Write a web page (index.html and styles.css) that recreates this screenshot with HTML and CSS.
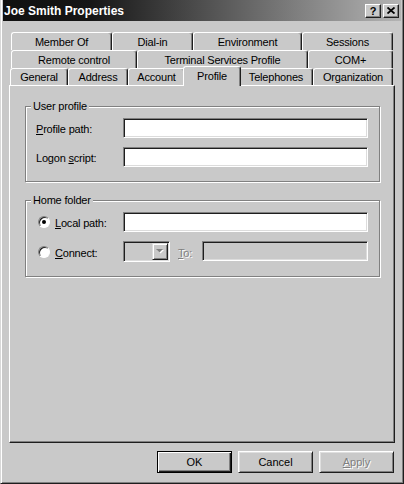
FILE: index.html
```html
<!DOCTYPE html>
<html lang="en">
<head>
    <meta charset="UTF-8">
    <meta name="viewport" content="width=device-width, initial-scale=1.0">
    <title>Joe Smith Properties</title>
    <link rel="stylesheet" href="styles.css">
</head>
<body>
    <div class="window">
        <div class="titlebar">
            <span class="title">Joe Smith Properties</span>
            <div class="caption-buttons">
                <span class="caption-btn">?</span>
                <span class="caption-btn">
                    <svg width="8" height="7" viewBox="0 0 8 7">
                        <path d="M0.5 0.5 L7.5 6.5 M7.5 0.5 L0.5 6.5" stroke="#000" stroke-width="1.8" fill="none"/>
                    </svg>
                </span>
            </div>
        </div>

        <div class="client">
            <div class="tabs">
                <div class="tab-row row-1">
                    <div class="tab">Member Of</div>
                    <div class="tab">Dial-in</div>
                    <div class="tab">Environment</div>
                    <div class="tab">Sessions</div>
                </div>
                <div class="tab-row row-2">
                    <div class="tab">Remote control</div>
                    <div class="tab">Terminal Services Profile</div>
                    <div class="tab">COM+</div>
                </div>
                <div class="tab-row row-3">
                    <div class="tab">General</div>
                    <div class="tab">Address</div>
                    <div class="tab">Account</div>
                    <div class="tab active">Profile</div>
                    <div class="tab">Telephones</div>
                    <div class="tab">Organization</div>
                </div>
            </div>

            <div class="panel">
                <fieldset class="group">
                    <legend>User profile</legend>
                    <div class="fields">
                        <label for="profilePath"><u>P</u>rofile path:</label>
                        <input type="text" id="profilePath" class="textbox">
                        <label for="logonScript">Logon <u>s</u>cript:</label>
                        <input type="text" id="logonScript" class="textbox">
                    </div>
                </fieldset>

                <fieldset class="group">
                    <legend>Home folder</legend>
                    <div class="fields fields-home">
                        <div class="option">
                            <span class="radio checked"></span>
                            <span><u>L</u>ocal path:</span>
                        </div>
                        <input type="text" class="textbox">
                        <div class="option">
                            <span class="radio"></span>
                            <span><u>C</u>onnect:</span>
                        </div>
                        <div class="connect">
                            <div class="combo">
                                <span class="combo-btn">
                                    <svg width="8" height="5" viewBox="0 0 8 5">
                                        <path d="M1 1 H8 L4.5 4.5 Z" fill="#fff"/>
                                        <path d="M0 0 H7 L3.5 3.5 Z" fill="#808080"/>
                                    </svg>
                                </span>
                            </div>
                            <span class="disabled-text to-label"><u>T</u>o:</span>
                            <input type="text" class="textbox" disabled>
                        </div>
                    </div>
                </fieldset>
            </div>

            <div class="actions">
                <button class="btn btn-default">OK</button>
                <button class="btn">Cancel</button>
                <button class="btn disabled-text"><u>A</u>pply</button>
            </div>
        </div>
    </div>
</body>
</html>
```

FILE: styles.css
```css
* {
    box-sizing: border-box;
}
body {
    margin: 0;
    background: #c9c9c9;
    font-family: "Liberation Sans", Arial, sans-serif;
    font-size: 11px;
    letter-spacing: -0.2px;
    color: #000;
}
.window {
    width: 404px;
    height: 484px;
    padding: 0 2px;
    background: #c9c9c9;
    border: 1px solid #1e1e1e;
    border-top: 0;
    border-left-color: #d8d8d8;
    box-shadow: inset 1px 0 #fff, inset -1px -1px #808080;
}

/* title bar */
.titlebar {
    display: flex;
    align-items: center;
    justify-content: space-between;
    height: 21px;
    padding: 0 2px 0 1px;
    background: linear-gradient(to right, #101010, #161616 22%, #b4b4b4);
}
.title {
    color: #fff;
    font-size: 12px;
    font-weight: bold;
    letter-spacing: 0;
}
.caption-buttons {
    display: flex;
    gap: 2px;
}
.caption-btn {
    display: flex;
    align-items: center;
    justify-content: center;
    width: 16px;
    height: 14px;
    background: #c9c9c9;
    border: 1px solid;
    border-color: #fff #1e1e1e #1e1e1e #fff;
    box-shadow: inset -1px -1px #808080;
    font-size: 11px;
    font-weight: bold;
    letter-spacing: 0;
}

/* tabs */
.client {
    padding: 11px 6px 0;
}
.tabs {
    height: 53px;
}
.tab-row {
    display: grid;
    height: 18px;
    margin-left: 2px;
}
.row-1 {
    grid-template-columns: 101px 81px 109px 91px;
}
.row-2 {
    grid-template-columns: 126px 171px 85px;
}
.row-3 {
    grid-template-columns: 58px 60px 57px 54px 74px 80px;
    height: 17px;
    margin-left: 1px;
}
.tab {
    display: flex;
    align-items: center;
    justify-content: center;
    background: #c9c9c9;
    border: 1px solid;
    border-color: #fff #1e1e1e #fff #fff;
    border-bottom: 0;
    border-radius: 3px 3px 0 0;
    box-shadow: inset -1px 0 #808080;
    white-space: nowrap;
}
.tab.active {
    position: relative;
    z-index: 1;
    margin: -2px -2px -1px;
    padding-bottom: 2px;
}

/* page */
.panel {
    height: 358px;
    padding: 14px 14px 0 15px;
    border: 1px solid;
    border-color: #fff #1e1e1e #1e1e1e #fff;
    box-shadow: inset -1px -1px #808080;
}
.group {
    margin: 0;
    padding: 5px 11px 14px 10px;
    border: 1px solid #808080;
    box-shadow: inset 1px 1px #fff, 1px 1px #fff;
}
.group + .group {
    margin-top: 12px;
}
.group legend {
    margin-left: -5px;
    padding: 0 2px;
    line-height: 13px;
    background: #c9c9c9;
}
.fields {
    display: grid;
    grid-template-columns: 87px 1fr;
    grid-template-rows: 20px 20px;
    row-gap: 9px;
    align-items: center;
}
.fields-home {
    grid-template-rows: 20px 21px;
}
.fields label {
    padding-top: 2px;
}
.textbox {
    width: 100%;
    height: 20px;
    margin: 0;
    padding: 0 3px;
    background: #fff;
    border: 1px solid;
    border-color: #808080 #fff #fff #808080;
    box-shadow: inset 1px 1px #1e1e1e, inset -1px -1px #dcdcdc;
    font: inherit;
    outline: none;
}
.textbox:disabled {
    background: #c9c9c9;
}
.option {
    display: flex;
    align-items: center;
    gap: 5px;
    padding-left: 2px;
}
.option span:last-child {
    padding-top: 2px;
}
.radio {
    position: relative;
    width: 12px;
    height: 12px;
    border-radius: 50%;
    background: #fff;
    border: 1px solid;
    border-color: #808080 #fff #fff #808080;
    box-shadow: inset 1px 1px #1e1e1e;
}
.radio.checked::after {
    content: "";
    position: absolute;
    top: 3px;
    left: 3px;
    width: 4px;
    height: 4px;
    border-radius: 50%;
    background: #000;
}
.connect {
    display: flex;
    align-items: flex-start;
    height: 21px;
}
.combo {
    display: flex;
    justify-content: flex-end;
    flex: none;
    width: 47px;
    height: 21px;
    padding: 1px;
    background: #c9c9c9;
    border: 1px solid;
    border-color: #808080 #fff #fff #808080;
    box-shadow: inset 1px 1px #1e1e1e, inset -1px -1px #dcdcdc;
}
.combo-btn {
    display: flex;
    align-items: center;
    justify-content: center;
    width: 16px;
    height: 17px;
    background: #c9c9c9;
    border: 1px solid;
    border-color: #dcdcdc #1e1e1e #1e1e1e #dcdcdc;
    box-shadow: inset 1px 1px #fff, inset -1px -1px #808080;
}
.to-label {
    flex: none;
    align-self: center;
    margin: 2px 10px 0 8px;
}
.disabled-text {
    color: #808080;
    text-shadow: 1px 1px #fff;
}

/* buttons */
.actions {
    display: flex;
    justify-content: flex-end;
    gap: 6px;
    margin-top: 8px;
    padding-right: 1px;
}
.btn {
    width: 75px;
    height: 22px;
    padding: 0;
    background: #c9c9c9;
    border: 1px solid;
    border-color: #fff #1e1e1e #1e1e1e #fff;
    box-shadow: inset 1px 1px #dfdfdf, inset -1px -1px #808080;
    font: inherit;
    color: #000;
}
.btn.disabled-text {
    color: #808080;
}
.btn-default {
    border-color: #000;
    box-shadow: inset 1px 1px #fff, inset -1px -1px #1e1e1e, inset -2px -2px #808080;
}
```
